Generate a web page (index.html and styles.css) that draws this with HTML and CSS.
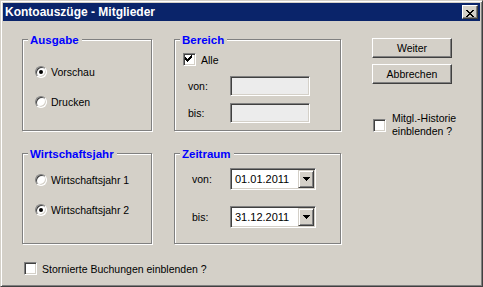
FILE: index.html
```html
<!DOCTYPE html>
<html lang="de">
<head>
    <meta charset="UTF-8">
    <meta name="viewport" content="width=device-width, initial-scale=1.0">
    <title>Kontoauszüge - Mitglieder</title>
    <link rel="stylesheet" href="styles.css">
</head>
<body>
    <div class="window">
        <!-- Titelleiste -->
        <div class="titlebar">
            <span class="title">Kontoauszüge - Mitglieder</span>
            <button class="close-button">
                <svg width="8" height="7" viewBox="0 0 8 7" shape-rendering="crispEdges">
                    <path fill="#000" d="M0 0h2v1h-2z M6 0h2v1h-2z M1 1h2v1h-2z M5 1h2v1h-2z M2 2h4v1h-4z M3 3h2v1h-2z M2 4h4v1h-4z M1 5h2v1h-2z M5 5h2v1h-2z M0 6h2v1h-2z M6 6h2v1h-2z"/>
                </svg>
            </button>
        </div>

        <div class="content">
            <div class="groups">
                <!-- Ausgabe -->
                <div class="group group-ausgabe">
                    <span class="group-title">Ausgabe</span>
                    <div class="group-body options">
                        <div class="option"><span class="radio checked"></span>Vorschau</div>
                        <div class="option"><span class="radio"></span>Drucken</div>
                    </div>
                </div>

                <!-- Bereich -->
                <div class="group group-bereich">
                    <span class="group-title">Bereich</span>
                    <div class="group-body">
                        <div class="option option-alle">
                            <span class="checkbox">
                                <svg width="11" height="11" viewBox="0 0 11 11" shape-rendering="crispEdges">
                                    <path fill="#000" d="M7 1h1v1h-1z M6 2h2v1h-2z M1 3h1v1h-1z M5 3h3v1h-3z M1 4h2v1h-2z M4 4h3v1h-3z M1 5h5v1h-5z M2 6h3v1h-3z M3 7h1v1h-1z"/>
                                </svg>
                            </span>Alle
                        </div>
                        <div class="field field-von"><span class="field-label">von:</span><span class="textbox"></span></div>
                        <div class="field field-bis"><span class="field-label">bis:</span><span class="textbox"></span></div>
                    </div>
                </div>

                <!-- Knöpfe rechts -->
                <div class="side">
                    <button class="push-button">Weiter</button>
                    <button class="push-button button-cancel">Abbrechen</button>
                    <div class="option option-history">
                        <span class="checkbox"></span>
                        <span>Mitgl.-Historie<br>einblenden ?</span>
                    </div>
                </div>

                <!-- Wirtschaftsjahr -->
                <div class="group group-jahr">
                    <span class="group-title">Wirtschaftsjahr</span>
                    <div class="group-body options">
                        <div class="option"><span class="radio"></span>Wirtschaftsjahr 1</div>
                        <div class="option"><span class="radio checked"></span>Wirtschaftsjahr 2</div>
                    </div>
                </div>

                <!-- Zeitraum -->
                <div class="group group-zeitraum">
                    <span class="group-title">Zeitraum</span>
                    <div class="group-body">
                        <div class="field field-von">
                            <span class="field-label">von:</span>
                            <span class="combo">
                                <span class="combo-text">01.01.2011</span>
                                <span class="combo-button">
                                    <svg width="7" height="4" viewBox="0 0 7 4" shape-rendering="crispEdges">
                                        <path fill="#000" d="M0 0h7v1h-1v1h-1v1h-1v1h-1v-1h-1v-1h-1v-1h-1z"/>
                                    </svg>
                                </span>
                            </span>
                        </div>
                        <div class="field field-bis">
                            <span class="field-label">bis:</span>
                            <span class="combo">
                                <span class="combo-text">31.12.2011</span>
                                <span class="combo-button">
                                    <svg width="7" height="4" viewBox="0 0 7 4" shape-rendering="crispEdges">
                                        <path fill="#000" d="M0 0h7v1h-1v1h-1v1h-1v1h-1v-1h-1v-1h-1v-1h-1z"/>
                                    </svg>
                                </span>
                            </span>
                        </div>
                    </div>
                </div>
            </div>

            <div class="option option-storno"><span class="checkbox"></span>Stornierte Buchungen einblenden ?</div>
        </div>
    </div>
</body>
</html>
```

FILE: styles.css
```css
/* Seite */
body {
    margin: 0;
    background: #d4d0c8;
    font-family: "Liberation Sans", Arial, sans-serif;
    font-size: 10.5px;
    color: #000;
}

/* Fensterrahmen */
.window {
    box-sizing: border-box;
    width: 483px;
    height: 287px;
    padding: 2px;
    border: 1px solid;
    border-color: #d4d0c8 #404040 #404040 #d4d0c8;
    box-shadow: inset 1px 1px #fff, inset -1px -1px #808080;
    background: #d4d0c8;
}

/* Titelleiste */
.titlebar {
    display: flex;
    align-items: center;
    justify-content: space-between;
    height: 18px;
    padding: 0 2px;
    background: #0a246a;
    color: #fff;
}

.title {
    font-weight: bold;
    font-size: 12px;
    line-height: 18px;
}

.close-button {
    box-sizing: border-box;
    display: block;
    width: 16px;
    height: 14px;
    padding: 2px 0 0 3px;
    border: 1px solid;
    border-color: #fff #404040 #404040 #fff;
    box-shadow: inset -1px -1px #808080;
    background: #d4d0c8;
}

.close-button svg {
    display: block;
}

/* Inhalt */
.content {
    padding: 18px 0 0 19px;
}

.groups {
    display: grid;
    grid-template-columns: 130px 167px 89px;
    grid-template-rows: 92px 91px;
    column-gap: 22px;
    row-gap: 22px;
}

/* Gruppenrahmen */
.group {
    border: 1px solid #808080;
    box-shadow: inset 1px 1px #fff, 1px 1px #fff;
}

.group-title {
    display: block;
    width: fit-content;
    margin: -7px 0 0 5px;
    padding: 0 3px 0 2px;
    background: #d4d0c8;
    color: #0000ff;
    font-weight: bold;
    font-size: 11.5px;
    line-height: 14px;
}

.options {
    display: flex;
    flex-direction: column;
    gap: 18px;
}

.group-ausgabe .group-body,
.group-jahr .group-body {
    padding-left: 12px;
}

.group-ausgabe .options {
    margin-top: 19px;
}

.group-jahr .options {
    margin-top: 13px;
}

.option {
    display: flex;
    align-items: center;
    height: 12px;
    line-height: 12px;
}

/* Optionsfelder */
.radio {
    box-sizing: border-box;
    flex: none;
    display: flex;
    align-items: center;
    justify-content: center;
    width: 12px;
    height: 12px;
    margin-right: 4px;
    border-radius: 50%;
    border: 1px solid;
    border-color: #808080 #fff #fff #808080;
    box-shadow: inset 1px 1px #404040, inset -1px -1px #d4d0c8;
    background: #fff;
}

.radio.checked::after {
    content: "";
    width: 4px;
    height: 4px;
    border-radius: 50%;
    background: #000;
}

/* Kontrollkästchen */
.checkbox {
    box-sizing: border-box;
    flex: none;
    width: 13px;
    height: 13px;
    margin-right: 5px;
    border: 1px solid;
    border-color: #808080 #fff #fff #808080;
    box-shadow: inset 1px 1px #404040, inset -1px -1px #d4d0c8;
    background: #fff;
}

.checkbox svg {
    display: block;
}

/* Bereich */
.group-bereich .group-body {
    padding-left: 8px;
}

.option-alle {
    height: 13px;
    margin-top: 6px;
}

.field {
    display: flex;
    align-items: center;
}

.group-bereich .field {
    margin-left: 5px;
}

.group-bereich .field-label {
    width: 42px;
}

.group-bereich .field-von {
    margin-top: 10px;
}

.group-bereich .field-bis {
    margin-top: 7px;
}

.textbox {
    box-sizing: border-box;
    width: 80px;
    height: 20px;
    border: 1px solid;
    border-color: #808080 #fff #fff #808080;
    box-shadow: inset 1px 1px #404040, inset -1px -1px #d4d0c8;
    background: #ececec;
}

/* Zeitraum */
.group-zeitraum .group-body {
    padding-left: 17px;
}

.group-zeitraum .field-label {
    width: 38px;
}

.group-zeitraum .field-von {
    margin-top: 7px;
}

.group-zeitraum .field-bis {
    margin-top: 16px;
}

.combo {
    box-sizing: border-box;
    display: flex;
    width: 86px;
    height: 22px;
    padding: 1px;
    border: 1px solid;
    border-color: #808080 #fff #fff #808080;
    box-shadow: inset 1px 1px #404040, inset -1px -1px #d4d0c8;
    background: #fff;
}

.combo-text {
    flex: 1;
    padding-left: 3px;
    font-size: 11px;
    line-height: 18px;
}

.combo-button {
    box-sizing: border-box;
    display: flex;
    align-items: center;
    justify-content: center;
    width: 16px;
    height: 18px;
    border: 1px solid;
    border-color: #d4d0c8 #404040 #404040 #d4d0c8;
    box-shadow: inset 1px 1px #fff, inset -1px -1px #808080;
    background: #d4d0c8;
}

.combo-button svg {
    display: block;
}

/* Knöpfe rechts */
.side {
    grid-column: 3;
    grid-row: 1 / span 2;
    margin: -1px 0 0 9px;
}

.push-button {
    box-sizing: border-box;
    display: block;
    width: 80px;
    height: 20px;
    padding: 0;
    border: 1px solid;
    border-color: #fff #404040 #404040 #fff;
    box-shadow: inset -1px -1px #808080;
    background: #d4d0c8;
    font: 10.5px "Liberation Sans", Arial, sans-serif;
    color: #000;
}

.button-cancel {
    margin-top: 6px;
}

.option-history {
    height: 26px;
    margin-top: 28px;
    line-height: 13px;
    white-space: nowrap;
}

.option-history .checkbox {
    margin: 0 6px 0 1px;
}

/* Unten */
.option-storno {
    height: 13px;
    margin: 18px 0 0 2px;
}
```
